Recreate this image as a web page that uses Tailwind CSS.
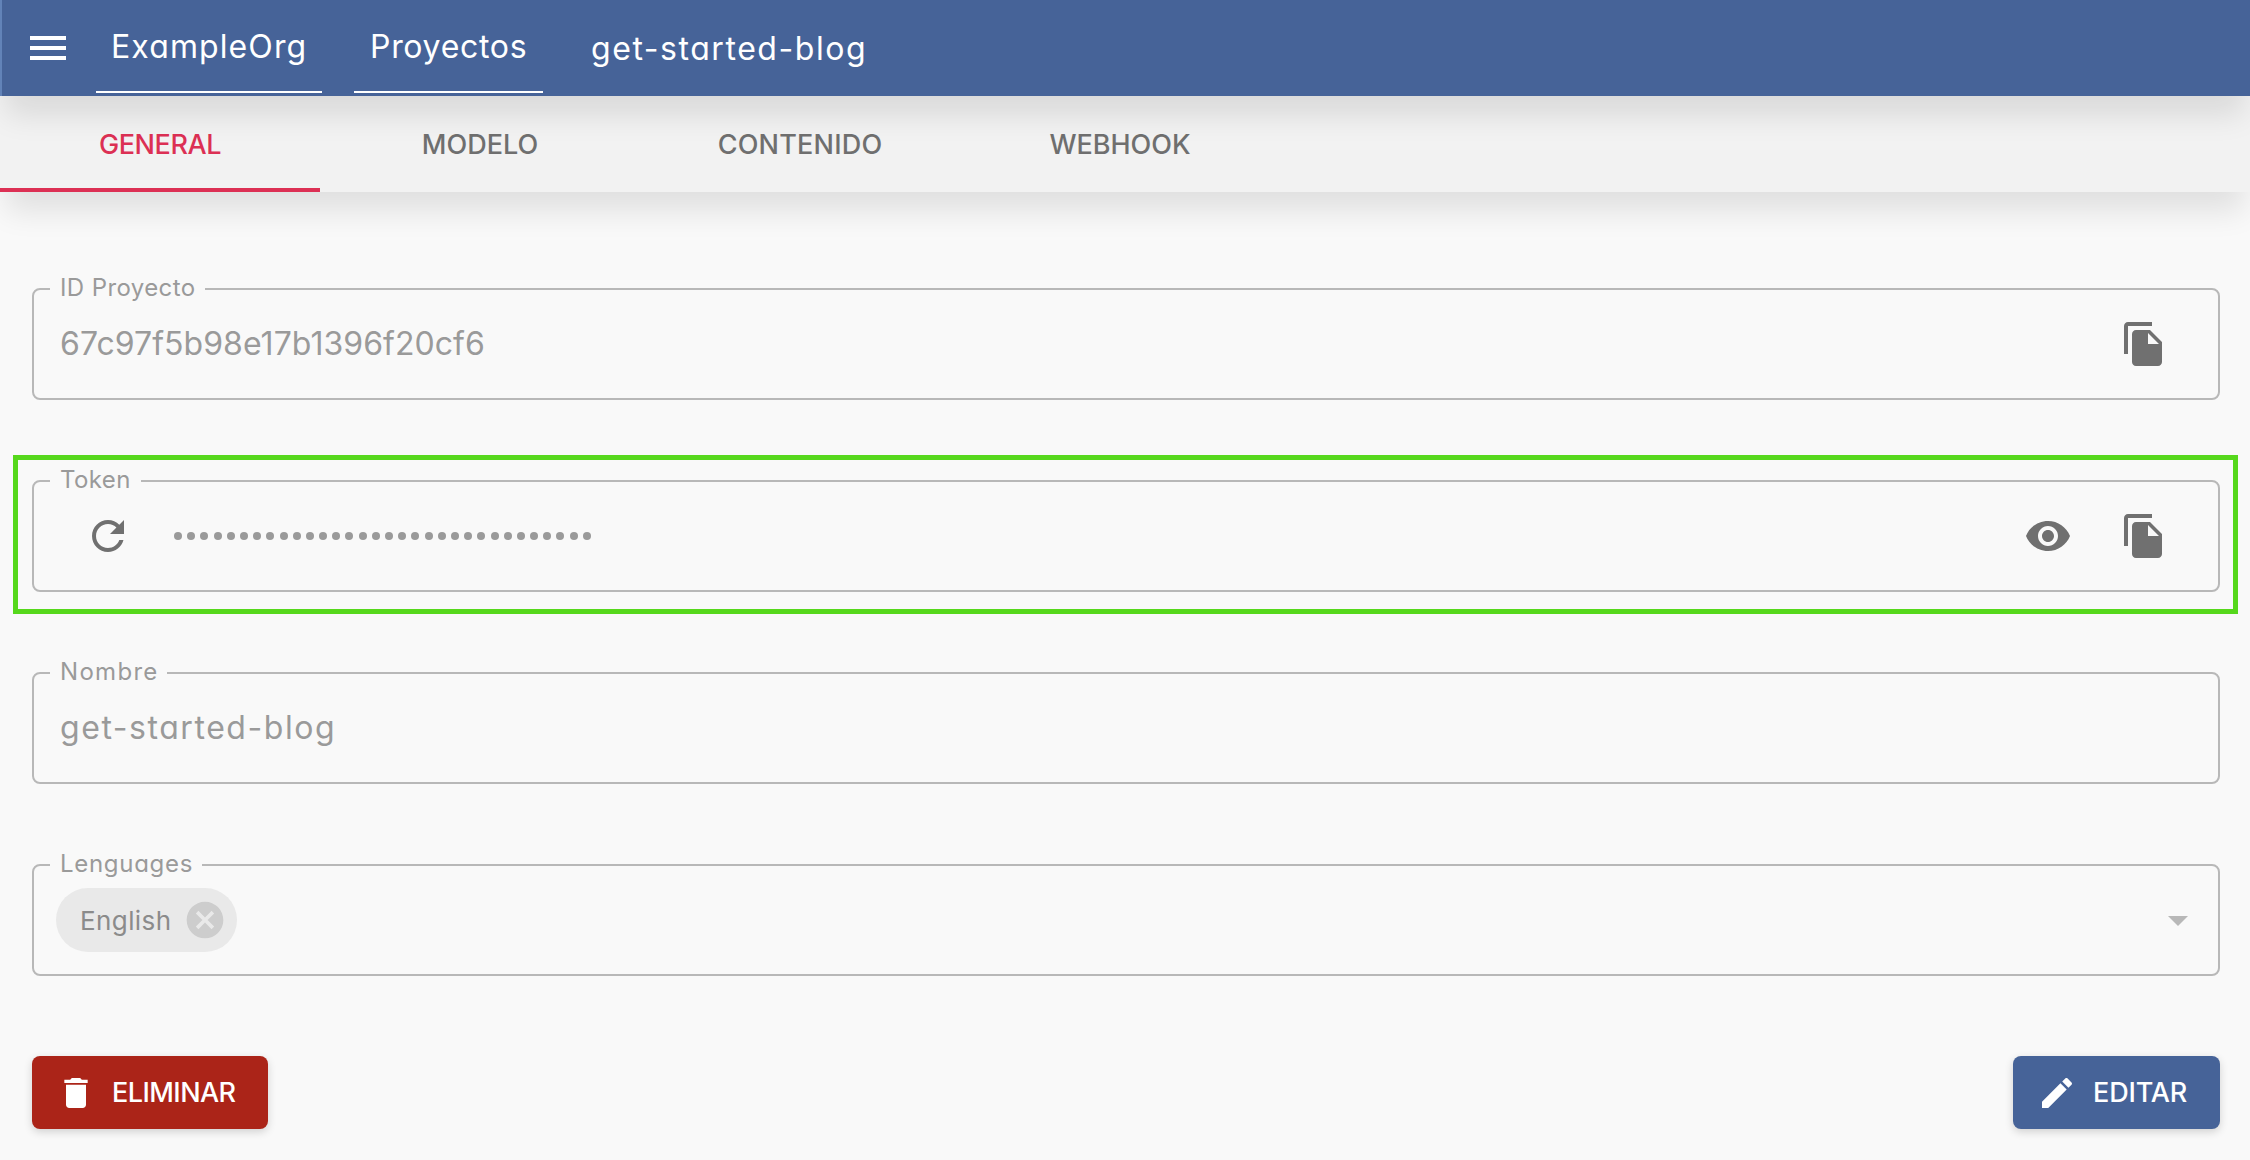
<!DOCTYPE html>
<html lang="es">
<head>
<meta charset="utf-8">
<title>get-started-blog</title>
<script src="https://cdn.jsdelivr.net/npm/@tailwindcss/browser@4"></script>
</head>
<body class="h-[1160px] overflow-hidden bg-[#f9f9f9] font-['Inter',sans-serif] text-[32px] [font-feature-settings:'cv11']">

<header class="relative z-20 flex h-24 items-stretch border-l-2 border-[#6283b8] bg-[#466398] text-white shadow-[0_25px_30px_-6px_rgba(0,0,0,0.10)]">
  <button class="ml-[22px] flex items-center" aria-label="Menú">
    <svg class="size-12" viewBox="0 0 24 24" fill="currentColor"><path d="M3 18h18v-2H3v2zm0-5h18v-2H3v2zm0-7v2h18V6H3z"/></svg>
  </button>
  <a class="mb-[3px] ml-6 flex w-[226px] items-center border-b-2 border-white pt-[3px] pl-[15px] leading-none tracking-[1.1px]">ExampleOrg</a>
  <a class="mb-[3px] ml-8 flex w-[189px] items-center border-b-2 border-white pt-[3px] pl-[16px] leading-none tracking-[0.7px]">Proyectos</a>
  <span class="ml-[48px] flex items-center pt-px leading-none tracking-[1.55px]">get-started-blog</span>
</header>

<nav class="relative z-10 flex h-24 bg-[#f2f2f2] text-[27px] font-medium text-[#6f6f6f] shadow-[0_25px_30px_-6px_rgba(0,0,0,0.10)]">
  <a class="flex w-80 items-center justify-center border-b-4 border-[#dc3054] pt-[6px] tracking-[-0.45px] text-[#dc3054]">GENERAL</a>
  <a class="flex w-80 items-center justify-center pt-[2px] tracking-[0px]">MODELO</a>
  <a class="flex w-80 items-center justify-center pt-[2px] tracking-[0.2px]">CONTENIDO</a>
  <a class="flex w-80 items-center justify-center pt-[2px]">WEBHOOK</a>
</nav>

<main class="flex flex-col pt-[84px] pr-[30px] pl-8 text-[#9a9a9a]">
  <div class="flex flex-col gap-[68px]">
    <fieldset class="h-[124px] rounded-lg border-2 border-[#b8b8b8] pl-4">
      <legend class="h-[26px] w-[155px] pb-[2px] pl-[10px] text-2xl leading-6 tracking-[0.4px]">ID Proyecto</legend>
      <div class="flex h-[84px] items-center justify-between pr-[50px] pl-[10px]">
        <span class="tracking-[0.05px]">67c97f5b98e17b1396f20cf6</span>
        <svg class="size-12 text-[#707070]" viewBox="0 0 24 24" fill="currentColor"><path d="M16 1H4c-1.100 0-2 .9-2 2v14h2V3h12V1zm-1 4l6 6v10c0 1.100-.9 2-2 2H7.990C6.890 23 6 22.100 6 21l.01-14c0-1.100.89-2 1.990-2h7zm-1 7h5.500L14 6.500V12z"/></svg>
      </div>
    </fieldset>

    <div class="relative">
      <fieldset class="h-[124px] rounded-lg border-2 border-[#b8b8b8] pl-4">
        <legend class="h-[26px] w-[91px] pb-[2px] pl-[10px] text-2xl leading-6 tracking-[0.4px]">Token</legend>
        <div class="flex h-[84px] items-center pr-[50px] pl-[34px]">
          <svg class="size-12 text-[#707070]" viewBox="0 0 24 24" fill="currentColor"><path d="M17.650 6.350C16.200 4.900 14.210 4 12 4c-4.420 0-7.990 3.580-7.990 8s3.570 8 7.990 8c3.730 0 6.840-2.550 7.730-6h-2.080c-.82 2.330-3.040 4-5.650 4-3.310 0-6-2.690-6-6s2.690-6 6-6c1.660 0 3.140.69 4.220 1.780L13 11h7V4l-2.350 2.350z"/></svg>
          <div id="mask" class="ml-[42px] flex w-[417px] justify-between"></div>
          <svg class="mr-12 ml-auto size-12 text-[#707070]" viewBox="0 0 24 24" fill="currentColor"><path d="M12 4.500C7 4.500 2.730 7.610 1 12c1.730 4.390 6 7.500 11 7.500s9.270-3.110 11-7.500c-1.730-4.390-6-7.500-11-7.500zM12 17c-2.760 0-5-2.240-5-5s2.240-5 5-5 5 2.240 5 5-2.240 5-5 5zm0-8c-1.660 0-3 1.340-3 3s1.340 3 3 3 3-1.340 3-3-1.340-3-3-3z"/></svg>
          <svg class="size-12 text-[#707070]" viewBox="0 0 24 24" fill="currentColor"><path d="M16 1H4c-1.100 0-2 .9-2 2v14h2V3h12V1zm-1 4l6 6v10c0 1.100-.9 2-2 2H7.990C6.890 23 6 22.100 6 21l.01-14c0-1.100.89-2 1.990-2h7zm-1 7h5.500L14 6.500V12z"/></svg>
        </div>
      </fieldset>
      <div class="pointer-events-none absolute -top-[13px] -right-[18px] -bottom-[22px] -left-[19px] border-[5px] border-[#56d81c]"></div>
    </div>

    <fieldset class="h-[124px] rounded-lg border-2 border-[#b8b8b8] pl-4">
      <legend class="h-[26px] w-[117px] pb-[2px] pl-[10px] text-2xl leading-6 tracking-[1.3px]">Nombre</legend>
      <div class="flex h-[84px] items-center pl-[10px]">
        <span class="tracking-[1.55px]">get-started-blog</span>
      </div>
    </fieldset>

    <fieldset class="h-[124px] rounded-lg border-2 border-[#b8b8b8] pl-4">
      <legend class="h-[26px] w-[152px] pb-[2px] pl-[10px] text-2xl leading-6 tracking-[0.7px]">Lenguages</legend>
      <div class="flex h-[84px] items-center justify-between pr-4 pl-[6px]">
        <div class="flex h-16 w-[181px] items-center justify-between rounded-full bg-[#e9e9e9] pr-[10px] pl-6 text-[26px] tracking-[0.4px] text-[#8b8b8b]">
          English
          <svg class="size-11 text-[#cdcdcd]" viewBox="0 0 24 24" fill="currentColor"><path d="M12 2C6.470 2 2 6.470 2 12s4.470 10 10 10 10-4.470 10-10S17.530 2 12 2zm5 13.590L15.590 17 12 13.410 8.410 17 7 15.590 10.590 12 7 8.410 8.410 7 12 10.590 15.590 7 17 8.410 13.410 12 17 15.590z"/></svg>
        </div>
        <svg class="size-12 text-[#b8b8b8]" viewBox="0 0 24 24" fill="currentColor"><path d="M7 10l5 5 5-5z"/></svg>
      </div>
    </fieldset>
  </div>

  <div class="mt-20 flex justify-between text-[27px] font-medium text-white">
    <button class="flex h-[73px] w-[236px] items-center rounded-lg bg-[#ab2418] pl-6 tracking-[-0.55px] shadow-[0_3px_8px_rgba(0,0,0,0.16)]">
      <svg class="mr-4 size-10" viewBox="0 0 24 24" fill="currentColor"><path d="M6 19c0 1.100.9 2 2 2h8c1.100 0 2-.9 2-2V7H6v12zM19 4h-3.500l-1-1h-5l-1 1H5v2h14V4z"/></svg>
      <span class="pt-px">ELIMINAR</span>
    </button>
    <button class="flex h-[73px] w-[207px] items-center rounded-lg bg-[#466398] pl-6 tracking-[-0.15px] shadow-[0_3px_8px_rgba(0,0,0,0.16)]">
      <svg class="mr-4 size-10" viewBox="0 0 24 24" fill="currentColor"><path d="M3 17.250V21h3.750L17.810 9.940l-3.750-3.750L3 17.250zM20.710 7.040c.39-.39.39-1.020 0-1.410l-2.340-2.340c-.39-.39-1.020-.39-1.410 0l-1.830 1.830 3.750 3.750 1.830-1.830z"/></svg>
      <span class="pt-px">EDITAR</span>
    </button>
  </div>
</main>

<script>
  const mask = document.getElementById('mask');
  for (let i = 0; i < 32; i++) {
    const dot = document.createElement('span');
    dot.className = 'size-2 rounded-full bg-[#9a9a9a]';
    mask.append(dot);
  }
</script>
</body>
</html>
